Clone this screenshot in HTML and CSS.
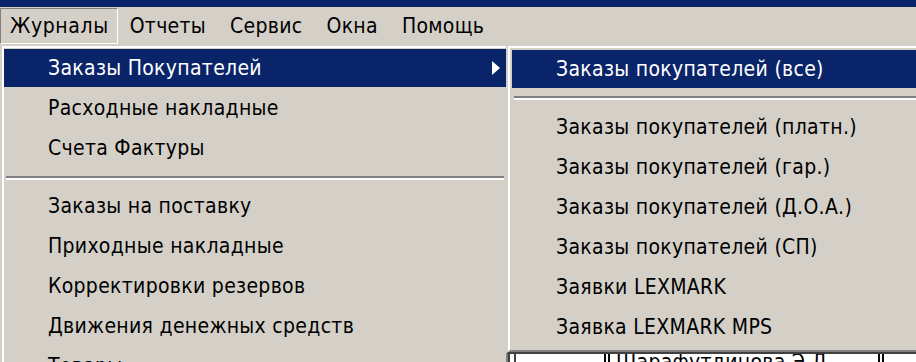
FILE: index.html
```html
<!DOCTYPE html>
<html lang="ru">
<head>
<meta charset="utf-8">
<title>Журналы</title>
<link rel="stylesheet" href="styles.css">
</head>
<body>
<div class="screen">
  <div class="titlebar"></div>
  <div class="menubar">
    <div class="mb-item pressed">Журналы</div>
    <div class="mb-item">Отчеты</div>
    <div class="mb-item">Сервис</div>
    <div class="mb-item">Окна</div>
    <div class="mb-item">Помощь</div>
  </div>
  <div class="workspace">
    <div class="grid-row">
      <div class="cell c1"></div>
      <div class="cell c2">Шарафутдинова Э.Л.</div>
    </div>
  </div>

  <div class="menu main">
    <div class="menu-inner">
      <div class="mi active"><span>Заказы Покупателей</span><i class="arrow"></i></div>
      <div class="mi"><span>Расходные накладные</span></div>
      <div class="mi"><span>Счета Фактуры</span></div>
      <div class="sep"></div>
      <div class="mi"><span>Заказы на поставку</span></div>
      <div class="mi"><span>Приходные накладные</span></div>
      <div class="mi"><span>Корректировки резервов</span></div>
      <div class="mi"><span>Движения денежных средств</span></div>
      <div class="mi"><span>Товары</span></div>
    </div>
  </div>

  <div class="menu sub">
    <div class="menu-inner">
      <div class="mi active"><span>Заказы покупателей (все)</span></div>
      <div class="sep"></div>
      <div class="mi"><span>Заказы покупателей (платн.)</span></div>
      <div class="mi"><span>Заказы покупателей (гар.)</span></div>
      <div class="mi"><span>Заказы покупателей (Д.О.А.)</span></div>
      <div class="mi"><span>Заказы покупателей (СП)</span></div>
      <div class="mi"><span>Заявки LEXMARK</span></div>
      <div class="mi"><span>Заявка LEXMARK MPS</span></div>
    </div>
  </div>
</div>
</body>
</html>
```

FILE: styles.css
```css
html, body {
  margin: 0;
  padding: 0;
  overflow: hidden;
  background: #ffffff;
}

.screen {
  position: relative;
  width: 916px;
  height: 362px;
  overflow: hidden;
  font-family: "DejaVu Sans Condensed", "DejaVu Sans", sans-serif;
  font-stretch: condensed;
  font-size: 21px;
  letter-spacing: 0.3px;
  color: #000;
}

.titlebar {
  height: 7px;
  background: #0a246a;
}

.menubar {
  display: flex;
  height: 37px;
  padding-top: 1px;
  box-sizing: border-box;
  background: #d4d0c8;
}

.mb-item {
  height: 36px;
  line-height: 34px;
  padding: 0 11px;
  border: 1px solid transparent;
  box-sizing: border-box;
  white-space: nowrap;
}

.mb-item.pressed {
  padding: 0 8px 0 9px;
  letter-spacing: 0.6px;
  border-top-color: #808080;
  border-left-color: #808080;
  border-right-color: #ffffff;
  border-bottom-color: #ffffff;
}

.workspace {
  height: 318px;
  background: #ffffff;
  padding-top: 306px;
  box-sizing: border-box;
}

.grid-row {
  display: flex;
  margin-left: 514px;
  height: 24px;
  border-left: 2px solid #404040;
}

.c1 {
  width: 88px;
}

.c2 {
  width: 262px;
  padding-left: 6px;
  line-height: 24px;
  border-left: 6px double #000;
  border-right: 6px double #000;
  white-space: nowrap;
  overflow: hidden;
}

.menu {
  position: absolute;
  top: 44px;
  box-sizing: border-box;
  background: #d4d0c8;
  border-top: 2px solid #d4d0c8;
  border-left: 2px solid #d4d0c8;
  border-right: 2px solid #404040;
  border-bottom: 2px solid #404040;
}

.menu-inner {
  display: flex;
  flex-direction: column;
  border-top: 2px solid #ffffff;
  border-left: 2px solid #ffffff;
  border-right: 2px solid #808080;
  border-bottom: 2px solid #808080;
}

.main {
  left: 0;
  width: 510px;
  height: 420px;
}

.main .menu-inner {
  height: 100%;
  box-sizing: border-box;
}

.sub {
  left: 506px;
  width: 430px;
}

.sub .menu-inner {
  padding: 1px 2px 3px 2px;
}

.mi {
  display: flex;
  align-items: center;
  flex: none;
  height: 38px;
  margin: 1px 0;
  padding-left: 44px;
  white-space: nowrap;
}

.mi.active {
  background: #0a246a;
  color: #ffffff;
}

.arrow {
  margin-left: auto;
  margin-right: 6px;
  width: 0;
  height: 0;
  border-left: 8px solid #ffffff;
  border-top: 7px solid transparent;
  border-bottom: 7px solid transparent;
}

.sep {
  flex: none;
  height: 0;
  margin: 8px 2px 6px 2px;
  border-top: 2px solid #808080;
  border-bottom: 2px solid #ffffff;
}

.sub .sep {
  margin: 7px 2px 7px 2px;
}
```
